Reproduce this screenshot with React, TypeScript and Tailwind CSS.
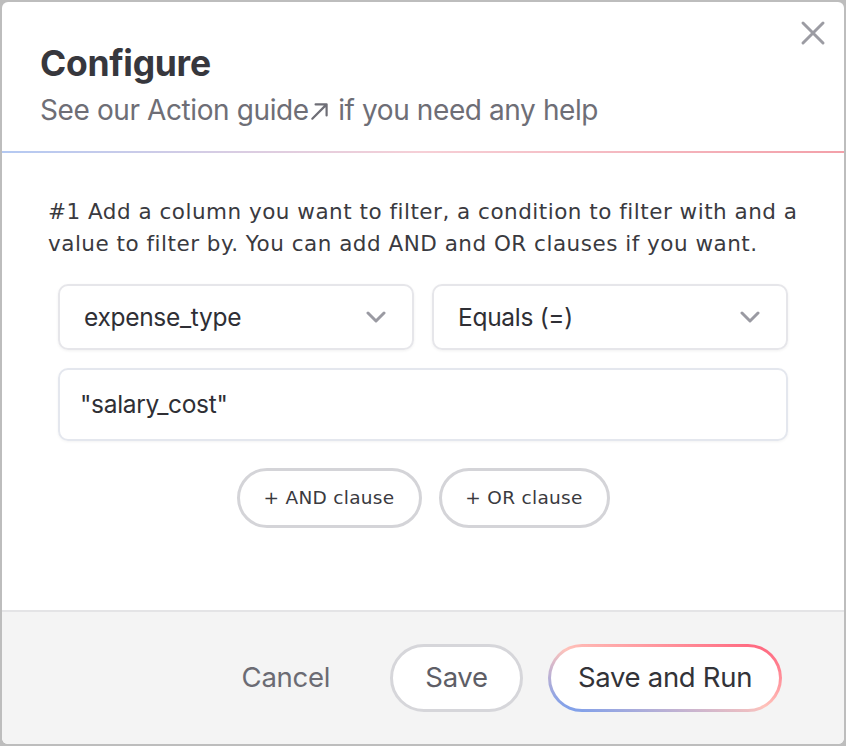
import React from "react";

function Chevron() {
  return (
    <svg width="20" height="12" viewBox="0 0 20 12" fill="none">
      <path d="M2 2 L10 10 L18 2" stroke="#9a9aa2" strokeWidth="3" strokeLinecap="round" strokeLinejoin="round" />
    </svg>
  );
}

export default function App() {
  return (
    <div className="w-[846px] h-[746px] bg-[#bdbdbd] p-[2px]">
      <div className="relative w-full h-full bg-white rounded-[6px] overflow-hidden flex flex-col">
        <button className="absolute right-[18px] top-[18px] w-[26px] h-[26px] flex items-center justify-center">
          <svg width="26" height="26" viewBox="0 0 26 26" fill="none">
            <path d="M3 3 L23 23 M23 3 L3 23" stroke="#9c9ca3" strokeWidth="3" strokeLinecap="round" />
          </svg>
        </button>
        <header className="pl-[38px] pt-[42px] pb-[25px]">
          <h1 className="font-['Inter',sans-serif] font-bold text-[35.5px] leading-[40px] text-[#37373d] tracking-[-0.3px]">
            Configure
          </h1>
          <p className="mt-[9px] font-['Inter',sans-serif] text-[28px] leading-[32px] text-[#6e6e76] tracking-[-0.4px]">
            See our Action guide
            <span className="inline-block align-[1px]">
              <svg width="22" height="22" viewBox="0 0 20 20" fill="none" className="inline">
                <path d="M3 17 L16 4 M6 4 H16 V14" stroke="#6e6e76" strokeWidth="2" strokeLinecap="round" strokeLinejoin="round" />
              </svg>
            </span>{" "}
            if you need any help
          </p>
        </header>
        <div className="h-[2px] bg-[linear-gradient(to_right,#b4c9f2,#f6cfd6_50%,#f3a0a9)]" />
        <main className="flex-1 pt-[43px]">
          <p className="pl-[46px] font-['DejaVu_Sans',sans-serif] text-[21.5px] leading-[32px] tracking-[0.5px] text-[#3a3a40] whitespace-nowrap">
            #1 Add a column you want to filter, a condition to filter with and a
            <br />
            value to filter by. You can add AND and OR clauses if you want.
          </p>
          <div className="px-[56px] mt-[24px] flex flex-col gap-[18px]">
            <div className="flex gap-[18px]">
              <div className="flex-1 h-[66px] rounded-[10px] border-2 border-[#e6e6ea] shadow-[0_1px_3px_rgba(0,0,0,0.06)] flex items-center justify-between pl-[24px] pr-[26px]">
                <span className="font-['Inter',sans-serif] text-[24.5px] text-[#2f2f35] tracking-[-0.3px]">expense_type</span>
                <Chevron />
              </div>
              <div className="flex-1 h-[66px] rounded-[10px] border-2 border-[#e6e6ea] shadow-[0_1px_3px_rgba(0,0,0,0.06)] flex items-center justify-between pl-[24px] pr-[26px]">
                <span className="font-['Inter',sans-serif] text-[24.5px] text-[#2f2f35] tracking-[-0.3px]">Equals (=)</span>
                <Chevron />
              </div>
            </div>
            <div className="h-[73px] rounded-[10px] border-2 border-[#e4e7ee] shadow-[0_1px_3px_rgba(0,0,0,0.05)] flex items-center pl-[20px]">
              <span className="font-['Inter',sans-serif] text-[24.5px] text-[#2f2f35] tracking-[-0.3px]">"salary_cost"</span>
            </div>
          </div>
          <div className="mt-[27px] flex justify-center gap-[17px]">
            <button className="w-[185px] h-[60px] rounded-full border-[3px] border-[#d4d4d8] bg-white font-['DejaVu_Sans',sans-serif] text-[18.5px] tracking-[0.3px] text-[#3a3a40]">
              + AND clause
            </button>
            <button className="w-[171px] h-[60px] rounded-full border-[3px] border-[#d4d4d8] bg-white font-['DejaVu_Sans',sans-serif] text-[18.5px] tracking-[0.3px] text-[#3a3a40]">
              + OR clause
            </button>
          </div>
        </main>
        <footer className="h-[134px] shrink-0 bg-[#f4f4f4] border-t-2 border-[#e4e4e6] flex items-center justify-end pr-[62px]">
          <button className="font-['Inter',sans-serif] text-[27.5px] text-[#6b6b73] tracking-[-0.3px] mr-[60px]">Cancel</button>
          <button className="w-[133px] h-[68px] rounded-full border-[3px] border-[#d6d6da] bg-white font-['Inter',sans-serif] text-[27.5px] text-[#5e5e66] tracking-[-0.3px] mr-[25px]">
            Save
          </button>
          <div className="w-[234px] h-[68px] rounded-full p-[3px] bg-[linear-gradient(to_top_right,#6d9bf1,#ffc3bb_50%,#ff5c78)]">
            <button className="w-full h-full rounded-full bg-white font-['Inter',sans-serif] text-[27.5px] text-[#333338] tracking-[-0.3px]">
              Save and Run
            </button>
          </div>
        </footer>
      </div>
    </div>
  );
}
